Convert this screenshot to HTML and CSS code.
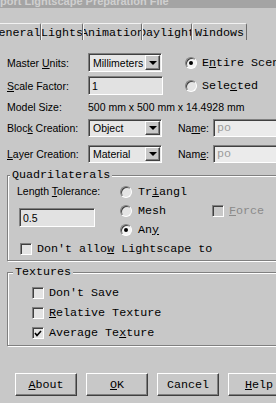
FILE: index.html
```html
<!DOCTYPE html>
<html>

<head>
    <meta charset="utf-8">
    <title>Export Lightscape Preparation File</title>
    <link rel="stylesheet" href="styles.css">
</head>

<body>
    <div class="titlebar"><span>port Lightscape Preparation File</span></div>

    <div class="tabs">
        <div class="tab tab-general">General</div>
        <div class="tab tab-lights">Lights</div>
        <div class="tab tab-anim">Animation</div>
        <div class="tab tab-day">Daylight</div>
        <div class="tab tab-win">Windows</div>
    </div>

    <div class="panel">
        <div class="row row-top">
            <span class="label">Master <u>U</u>nits:</span>
            <div class="combo"><span class="combo-text">Millimeters</span><span class="combo-btn"></span></div>
            <div class="option option-top"><span class="radio checked"></span><span class="mono">E<u>n</u>tire Scene</span></div>
        </div>
        <div class="row row-top row-scale">
            <span class="label"><u>S</u>cale Factor:</span>
            <div class="field">1</div>
            <div class="option option-top"><span class="radio"></span><span class="mono">Sele<u>c</u>ted</span></div>
        </div>
        <div class="row row-model">
            <span class="label">Model Size:</span>
            <span>500 mm x 500 mm x 14.4928 mm</span>
        </div>
        <div class="row row-create">
            <span class="label">Bloc<u>k</u> Creation:</span>
            <div class="combo"><span class="combo-text">Object</span><span class="combo-btn"></span></div>
            <span class="name-label">Na<u>m</u>e:</span>
            <div class="field name-field mono">po</div>
        </div>
        <div class="row row-create row-layer">
            <span class="label"><u>L</u>ayer Creation:</span>
            <div class="combo"><span class="combo-text">Material</span><span class="combo-btn"></span></div>
            <span class="name-label">Nam<u>e</u>:</span>
            <div class="field name-field mono">po</div>
        </div>

        <div class="group group-quad">
            <span class="group-title mono">Quadrilaterals</span>
            <div class="quad-body">
                <div class="tolerance">
                    <div class="tolerance-label">Length <u>T</u>olerance:</div>
                    <div class="field tolerance-field">0.5</div>
                </div>
                <div class="option quad-radio r1"><span class="radio"></span><span class="mono">Tr<u>i</u>angl</span></div>
                <div class="option quad-radio r2"><span class="radio"></span><span class="mono">Mesh</span></div>
                <div class="option quad-radio r3"><span class="radio checked"></span><span class="mono">An<u>y</u></span></div>
                <div class="option force"><span class="check disabled"></span><span class="mono"><u>F</u>orce</span></div>
                <div class="option dont-allow"><span class="check"></span><span class="mono">Don't allo<u>w</u> Lightscape to</span></div>
            </div>
        </div>

        <div class="group group-tex">
            <span class="group-title mono">Textures</span>
            <div class="tex-body">
                <div class="option"><span class="check"></span><span class="mono">Don't Save</span></div>
                <div class="option"><span class="check"></span><span class="mono"><u>R</u>elative Texture</span></div>
                <div class="option"><span class="check"><svg width="8" height="7" viewBox="0 0 8 7"><polyline points="1,3 3,5.5 7,1" fill="none" stroke="#000" stroke-width="1.6"/></svg></span><span class="mono">Average Te<u>x</u>ture</span></div>
            </div>
        </div>

        <div class="buttons">
            <div class="button mono"><u>A</u>bout</div>
            <div class="button mono"><u>O</u>K</div>
            <div class="button mono">Cancel</div>
            <div class="button mono"><u>H</u>elp</div>
        </div>
    </div>
</body>

</html>
```

FILE: styles.css
```css
* {
    box-sizing: border-box;
    --face: #c8c8c8;
    --shadow: #808080;
    --dark: #404040;
    --light: #ffffff;
}

body {
    margin: 0;
    width: 276px;
    height: 403px;
    overflow: hidden;
    background-color: var(--face);
    font-family: "Liberation Sans", Arial, sans-serif;
    font-size: 10.5px;
    color: #000;
}

u {
    text-underline-offset: 1px;
}

.mono {
    font-family: "Liberation Mono", "Courier New", monospace;
    font-size: 11.7px;
    white-space: nowrap;
}

/* title bar, cut at the top */
.titlebar {
    height: 8px;
    background-color: #a4a4a4;
    overflow: hidden;
}

.titlebar span {
    display: block;
    margin-top: -4px;
    line-height: 11px;
    font-size: 11px;
    font-weight: bold;
    color: #d0d0d0;
    white-space: nowrap;
}

/* tab strip */
.tabs {
    display: flex;
    height: 17px;
    margin-top: 15px;
    margin-left: -9px;
}

.tab {
    flex: none;
    display: flex;
    justify-content: center;
    align-items: center;
    overflow: hidden;
    white-space: nowrap;
    padding-top: 1px;
    border-top: 1px solid #f2f2f2;
    border-left: 1px solid #f2f2f2;
    border-right: 1px solid #6c6c6c;
    border-radius: 2px 2px 0 0;
    font-family: "Liberation Mono", "Courier New", monospace;
    font-size: 11.7px;
}

.tab-general { width: 50px; }
.tab-lights { width: 42px; }
.tab-anim { width: 59px; }
.tab-day { width: 50px; }
.tab-win { width: 55px; }

.panel {
    padding-top: 13px;
    padding-left: 7px;
}

/* top rows */
.row {
    display: flex;
    align-items: center;
}

.label {
    flex: none;
    width: 81px;
    white-space: nowrap;
}

.row-top {
    height: 19px;
}

.row-scale {
    margin-top: 4px;
}

.row-model {
    height: 24px;
}

.row-create {
    height: 18px;
}

.row-layer {
    margin-top: 8px;
}

.field {
    flex: none;
    display: flex;
    align-items: center;
    width: 75px;
    height: 19px;
    padding-left: 3px;
    background-color: #e2e2e2;
    border: 1px solid;
    border-color: var(--shadow) var(--light) var(--light) var(--shadow);
    box-shadow: inset 1px 1px var(--dark);
}

.combo {
    flex: none;
    display: flex;
    align-items: center;
    justify-content: space-between;
    width: 74px;
    height: 100%;
    margin-right: 1px;
    padding: 1px 1px 1px 4px;
    background-color: #e6e6e6;
    border: 1px solid;
    border-color: var(--shadow) var(--light) var(--light) var(--shadow);
    box-shadow: inset 1px 1px var(--dark);
}

.combo-btn {
    flex: none;
    display: flex;
    align-items: center;
    justify-content: center;
    width: 15px;
    height: 100%;
    background-color: var(--face);
    border: 1px solid;
    border-color: var(--light) var(--dark) var(--dark) var(--light);
    box-shadow: inset -1px -1px var(--shadow);
}

.combo-btn::after {
    content: "";
    border-top: 4px solid #000;
    border-left: 4px solid transparent;
    border-right: 4px solid transparent;
}

.name-label {
    flex: none;
    width: 35px;
    margin-left: 15px;
}

.name-field {
    width: 80px;
    height: 100%;
    background-color: #ebebeb;
    color: #9c9c9c;
}

/* radios and check boxes */
.option {
    display: flex;
    align-items: center;
    gap: 5px;
}

.option-top {
    margin-left: 22px;
}

.radio {
    flex: none;
    display: flex;
    align-items: center;
    justify-content: center;
    width: 12px;
    height: 12px;
    border-radius: 50%;
    background-color: #e4e4e4;
    border: 1px solid;
    border-color: var(--shadow) var(--light) var(--light) var(--shadow);
    box-shadow: inset 1px 1px var(--dark);
}

.radio.checked {
    background-color: #f4f4f4;
}

.radio.checked::after {
    content: "";
    width: 4px;
    height: 4px;
    border-radius: 50%;
    background-color: #000;
}

.check {
    flex: none;
    display: flex;
    align-items: center;
    justify-content: center;
    width: 12px;
    height: 12px;
    background-color: #e4e4e4;
    border: 1px solid;
    border-color: var(--shadow) var(--light) var(--light) var(--shadow);
    box-shadow: inset 1px 1px var(--dark);
}

.check.disabled {
    background-color: var(--face);
}

.force .mono {
    color: #8a8a8a;
}

/* group boxes */
.group {
    margin-right: -20px;
    border: 1px solid var(--shadow);
    box-shadow: inset 1px 1px var(--light), 1px 1px var(--light);
}

.group-title {
    display: block;
    width: fit-content;
    margin: -8px 0 0 2px;
    padding: 0 2px;
    line-height: 14px;
    background-color: var(--face);
}

.group-quad {
    margin-top: 12px;
}

.quad-body {
    display: grid;
    grid-template-columns: 103px 92px auto;
    grid-template-rows: repeat(4, 19px);
    padding: 0 0 2px 9px;
}

.tolerance {
    grid-column: 1;
    grid-row: 1 / 4;
}

.tolerance-label {
    height: 19px;
    line-height: 19px;
    white-space: nowrap;
}

.tolerance-field {
    width: 76px;
    margin: 7px 0 0 2px;
}

.quad-radio {
    grid-column: 2;
    gap: 6px;
}

.r1 { grid-row: 1; }
.r2 { grid-row: 2; }
.r3 { grid-row: 3; }

.force {
    grid-column: 3;
    grid-row: 2;
}

.dont-allow {
    grid-column: 1 / 4;
    grid-row: 4;
    margin-left: 3px;
}

.group-tex {
    margin-top: 11px;
}

.group-tex .group-title {
    margin-left: 5px;
}

.tex-body {
    display: grid;
    grid-template-rows: repeat(3, 20px);
    padding: 4px 0 2px 24px;
}

/* dialog buttons */
.buttons {
    display: flex;
    gap: 9px;
    margin-top: 27px;
    padding-left: 8px;
}

.button {
    flex: none;
    display: flex;
    align-items: center;
    justify-content: center;
    width: 62px;
    height: 23px;
    border: 1px solid;
    border-color: var(--light) var(--dark) var(--dark) var(--light);
    box-shadow: inset -1px -1px var(--shadow);
}
```
